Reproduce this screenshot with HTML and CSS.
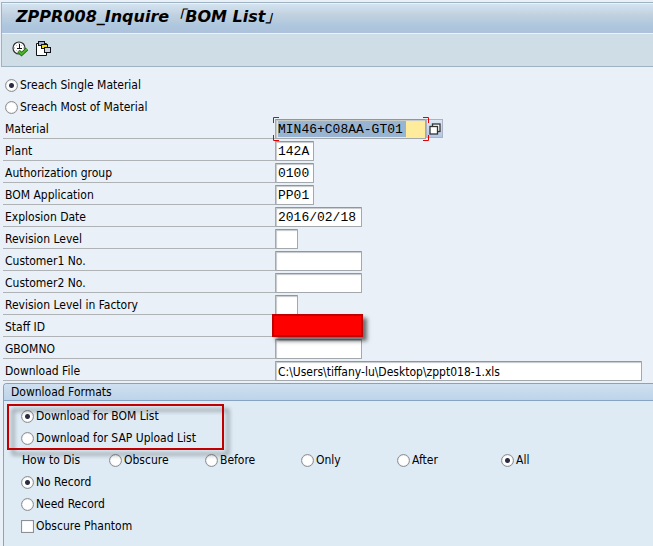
FILE: index.html
```html
<!DOCTYPE html>
<html lang="en">
<head>
    <meta charset="UTF-8">
    <title>ZPPR008_Inquire「BOM List」</title>
    <link rel="stylesheet" href="styles.css">
</head>
<body>
    <header class="window-head">
        <h1>ZPPR008_Inquire<span class="bracket" lang="zh-Hant">「</span>BOM List<span class="bracket" lang="zh-Hant">」</span></h1>
        <div class="toolbar">
            <button type="button" class="tool" aria-label="Execute">
                <svg width="16" height="16" viewBox="0 0 16 16">
                    <circle cx="7" cy="7" r="6" fill="#fff" stroke="#333" stroke-width="1.2"/>
                    <path d="M7 2v1M2 7h1M11 7h1M4 4l.6.6M10 4l-.6.6M4 10l.6-.6" stroke="#999"/>
                    <path d="M7.500 3v5M5 7.500h5" stroke="#111" fill="none"/>
                    <path d="M6.500 10l3 3L15 8" fill="none" stroke="#1d5c12" stroke-width="3.500"/>
                    <path d="M6.500 10l3 3L15 8" fill="none" stroke="#4db32c" stroke-width="2"/>
                </svg>
            </button>
            <button type="button" class="tool" aria-label="Get variant">
                <svg width="16" height="16" viewBox="0 0 16 16">
                    <path d="M.5 2.500h10v12H.5z" fill="#fff" stroke="#111"/>
                    <rect x="2.500" y=".5" width="6" height="4" fill="#a9b0d6" stroke="#111"/>
                    <rect x="5.500" y="3.500" width="6" height="4" fill="#f5df00" stroke="#111"/>
                    <rect x="8.500" y="6.500" width="6" height="5" fill="#cdd2ea" stroke="#111"/>
                </svg>
            </button>
        </div>
    </header>

    <form class="selection">
        <!-- Search mode -->
        <div class="option-row">
            <input type="radio" id="single" name="mode" checked>
            <label for="single">Sreach Single Material</label>
        </div>
        <div class="option-row">
            <input type="radio" id="most" name="mode">
            <label for="most">Sreach Most of Material</label>
        </div>

        <!-- Selection fields -->
        <div class="field-row">
            <label for="material">Material</label>
            <div class="focus-field">
                <input type="text" class="mono w-material" id="material" value="MIN46+C08AA-GT01">
                <svg class="corners" width="156" height="24" viewBox="0 0 156 24">
                    <path d="M6 .5H.5V6M150 .5h5.500V6M.5 18v5.500H6M155.500 18v5.500H150" fill="none" stroke="#e00000"/>
                </svg>
            </div>
            <button type="button" class="match-code" aria-label="Search help">
                <svg width="12" height="12" viewBox="0 0 12 12">
                    <rect x="3.500" y="1" width="7.500" height="7.500" fill="#fff" stroke="#333" stroke-width="1.300"/>
                    <rect x="1" y="3.500" width="7.500" height="7.500" fill="#fff" stroke="#333" stroke-width="1.300"/>
                </svg>
            </button>
        </div>
        <div class="field-row">
            <label for="plant">Plant</label>
            <input type="text" class="mono w-code" id="plant" value="142A">
        </div>
        <div class="field-row">
            <label for="authGroup">Authorization group</label>
            <input type="text" class="mono w-code" id="authGroup" value="0100">
        </div>
        <div class="field-row">
            <label for="bomApp">BOM Application</label>
            <input type="text" class="mono w-code" id="bomApp" value="PP01">
        </div>
        <div class="field-row">
            <label for="explosion">Explosion Date</label>
            <input type="text" class="mono w-medium" id="explosion" value="2016/02/18">
        </div>
        <div class="field-row">
            <label for="revision">Revision Level</label>
            <input type="text" class="mono w-small" id="revision">
        </div>
        <div class="field-row">
            <label for="customer1">Customer1 No.</label>
            <input type="text" class="mono w-medium" id="customer1">
        </div>
        <div class="field-row">
            <label for="customer2">Customer2 No.</label>
            <input type="text" class="mono w-medium" id="customer2">
        </div>
        <div class="field-row">
            <label for="factoryRevision">Revision Level in Factory</label>
            <input type="text" class="mono w-small" id="factoryRevision">
        </div>
        <div class="field-row">
            <label for="staff">Staff ID</label>
            <div class="masked">
                <input type="text" class="mono w-medium" id="staff">
            </div>
        </div>
        <div class="field-row">
            <label for="gbomno">GBOMNO</label>
            <input type="text" class="mono w-medium" id="gbomno">
        </div>
        <div class="field-row">
            <label for="file">Download File</label>
            <input type="text" class="w-file" id="file" value="C:\Users\tiffany-lu\Desktop\zppt018-1.xls">
        </div>

        <!-- Download formats -->
        <section class="group">
            <h2>Download Formats</h2>
            <div class="group-body">
                <div class="marked">
                    <div class="option-row">
                        <input type="radio" id="bomList" name="format" checked>
                        <label for="bomList">Download for BOM List</label>
                    </div>
                    <div class="option-row">
                        <input type="radio" id="sapList" name="format">
                        <label for="sapList">Download for SAP Upload List</label>
                    </div>
                </div>
                <div class="display-row">
                    <span class="display-title">How to Dis</span>
                    <div class="option-row">
                        <input type="radio" id="obscure" name="display">
                        <label for="obscure">Obscure</label>
                    </div>
                    <div class="option-row">
                        <input type="radio" id="before" name="display">
                        <label for="before">Before</label>
                    </div>
                    <div class="option-row">
                        <input type="radio" id="only" name="display">
                        <label for="only">Only</label>
                    </div>
                    <div class="option-row wide">
                        <input type="radio" id="after" name="display">
                        <label for="after">After</label>
                    </div>
                    <div class="option-row">
                        <input type="radio" id="all" name="display" checked>
                        <label for="all">All</label>
                    </div>
                </div>
                <div class="option-row">
                    <input type="radio" id="noRecord" name="record" checked>
                    <label for="noRecord">No Record</label>
                </div>
                <div class="option-row">
                    <input type="radio" id="needRecord" name="record">
                    <label for="needRecord">Need Record</label>
                </div>
                <div class="option-row">
                    <input type="checkbox" id="phantom">
                    <label for="phantom">Obscure Phantom</label>
                </div>
            </div>
        </section>
    </form>
</body>
</html>
```

FILE: styles.css
```css
*,
*::after {
    box-sizing: border-box;
}
html {
    height: 100%;
}
body {
    display: flex;
    flex-direction: column;
    min-height: 100%;
    margin: 0;
    padding-top: 2px;
    background: #e9f0f7;
    color: #000;
    font-family: "DejaVu Sans Condensed", "DejaVu Sans", sans-serif;
    font-size: 12px;
    line-height: 20px;
}

/* Title bar and toolbar */
.window-head {
    margin-left: 1px;
    border: 1px solid #9fb2c2;
    border-right: none;
    background: #cfdde7;
}
h1 {
    height: 31px;
    margin: 0;
    padding: 0 14px;
    border-top: 1px solid #e9f3fa;
    border-bottom: 1px solid #e9f3fa;
    background: linear-gradient(#d4e3f0, #c0d0df 40%, #adc7de 75%, #adc2da);
    font-family: "DejaVu Sans", sans-serif;
    font-size: 16px;
    font-style: italic;
    font-weight: bold;
    line-height: 26px;
}
.bracket {
    font-family: "Noto Sans CJK TC", sans-serif;
    font-weight: normal;
    line-height: 1;
}
.toolbar {
    display: flex;
    gap: 8px;
    height: 32px;
    padding: 7px 10px;
}
.tool {
    display: flex;
    width: 16px;
    height: 16px;
    padding: 0;
    border: none;
    background: none;
}

/* Form rows */
.selection {
    display: flex;
    flex: 1;
    flex-direction: column;
    gap: 2px;
    margin: 0;
    padding: 8px 0 0 3px;
}
.option-row {
    display: flex;
    align-items: center;
    gap: 2px;
    height: 20px;
    padding-left: 2px;
}
.field-row {
    display: flex;
    height: 20px;
}
.field-row > label {
    flex: 0 0 272px;
    padding-left: 2px;
    border-bottom: 1px solid #b0b3b6;
}

input[type="text"] {
    height: 20px;
    margin: 0;
    padding: 1px 2px 0;
    border: 1px solid #a3a8ad;
    border-top-color: #8f969c;
    border-radius: 1px;
    background-color: #fff;
    box-shadow: inset 1px 1px 1px #c5c9cc;
    color: #000;
    font: inherit;
    line-height: 16px;
    outline: none;
}
input[type="text"].mono {
    font-family: "Liberation Mono", monospace;
    font-size: 13px;
}
.w-small {
    width: 23px;
}
.w-code {
    width: 39px;
}
.w-medium {
    width: 87px;
}
.w-material {
    width: 151px;
}
.w-file {
    width: 367px;
}

/* Focused field with its selected value */
#material {
    background: #ffeb9c linear-gradient(#99b4d1, #99b4d1) no-repeat 2px 1px;
    background-size: 128px 16px;
}
.focus-field {
    position: relative;
    display: flex;
}
.corners {
    position: absolute;
    top: -2px;
    left: -2px;
    z-index: 1;
    pointer-events: none;
}
.match-code {
    display: flex;
    align-items: center;
    justify-content: center;
    width: 17px;
    height: 19px;
    padding: 0;
    border: 1px solid #a9b3c4;
    background: linear-gradient(#dde7f5, #b3c6e4);
}

/* Redacted value */
.masked {
    position: relative;
    display: flex;
}
.masked::after {
    content: "";
    position: absolute;
    inset: -3px -1px 0 -3px;
    border: 2px solid #c00000;
    background: #f00;
    box-shadow: 4px 4px 4px rgba(0, 0, 0, 0.55);
}

/* Download formats group */
.group {
    flex: 1;
    border: 1px solid #86a3c3;
    border-right: none;
    border-bottom: none;
    border-top-left-radius: 4px;
    background: #deebf5;
}
h2 {
    margin: 0;
    padding-left: 7px;
    border-bottom: 1px solid #86a3c3;
    border-top-left-radius: 3px;
    background: linear-gradient(#cfe0f0, #bdd4ea);
    font-size: 12px;
    font-weight: normal;
    line-height: 16px;
}
.group-body {
    display: flex;
    flex-direction: column;
    gap: 2px;
    padding: 5px 0 0 15px;
}
.marked {
    position: relative;
    display: flex;
    flex-direction: column;
    gap: 2px;
}
.marked::after {
    content: "";
    position: absolute;
    top: -2px;
    left: -12px;
    width: 217px;
    height: 46px;
    border: 2px solid #c00000;
    filter: drop-shadow(5px 5px 2px rgba(0, 0, 0, 0.45));
    pointer-events: none;
}
.display-row {
    display: flex;
}
.display-title {
    width: 88px;
    padding-left: 3px;
}
.display-row .option-row {
    width: 96px;
}
.display-row .wide {
    width: 104px;
}

/* Radio buttons and tick box */
input[type="radio"],
input[type="checkbox"] {
    appearance: none;
    width: 13px;
    height: 13px;
    margin: 0;
    border: 1px solid #8e9093;
    background: #fff;
    box-shadow: inset 0 0 1px #9a9c9f;
}
input[type="radio"] {
    border-radius: 50%;
}
input[type="radio"]:checked {
    background: radial-gradient(circle, #2c2c44 2px, #fff 3px);
}
```
